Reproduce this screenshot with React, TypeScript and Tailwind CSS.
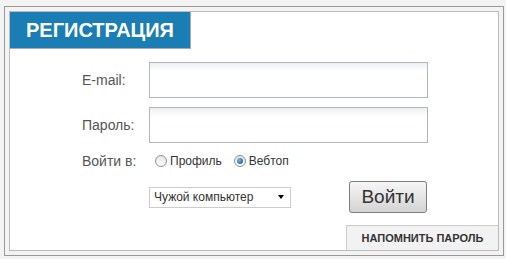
const font = { fontFamily: '"Liberation Sans", Arial, sans-serif' };

const Radio = ({ checked, label }: { checked?: boolean; label: string }) => (
    <label className="flex items-center gap-[3px] text-[12px] text-[#333]">
        <span className="flex h-[12px] w-[12px] items-center justify-center rounded-full border border-[#8f8f8f] bg-gradient-to-b from-[#e6e6e6] to-[#fdfdfd]">
            {checked && <span className="h-[6px] w-[6px] rounded-full bg-[radial-gradient(circle_at_35%_35%,#6fb7ec,#0c4f8a)]" />}
        </span>
        {label}
    </label>
);

const Field = ({ label }: { label: string }) => (
    <div className="flex items-center">
        <span className="w-[67px] text-[14px] text-[#555]">{label}</span>
        <div className="h-[36px] w-[279px] border border-[#b4b4c6] bg-gradient-to-b from-[#eceff1] via-white via-[25%] to-white" />
    </div>
);

export default function App() {
    return (
        <div className="h-[259px] w-[506px] bg-[#f3f3f3] pt-[6px] pl-[4px]" style={font}>
            <div className="h-[250px] w-[500px] border border-[#999] p-[4px]">
                <div className="flex h-full w-full flex-col border border-[#bbb] bg-white">
                    <div className="flex h-[37px] w-[181px] items-center border-r border-b border-[#aaa] bg-[#1a7db4] pl-[16px] text-[20px] font-bold text-white">
                        РЕГИСТРАЦИЯ
                    </div>

                    <div className="ml-[72px] mt-[13px] flex flex-col gap-[9px]">
                        <Field label="E-mail:" />
                        <Field label="Пароль:" />
                    </div>

                    <div className="ml-[72px] mt-[8px] flex h-[20px] items-center">
                        <span className="w-[73px] text-[14px] text-[#555]">Войти в:</span>
                        <div className="flex items-center gap-[12px]">
                            <Radio label="Профиль" />
                            <Radio checked label="Вебтоп" />
                        </div>
                    </div>

                    <div className="ml-[139px] mt-[10px] flex items-center">
                        <div className="flex h-[21px] w-[142px] items-center justify-between border border-[#ccc] pl-[4px] pr-[6px] text-[12px] text-[#333]">
                            Чужой компьютер
                            <span className="h-0 w-0 border-x-[3.5px] border-t-[4px] border-x-transparent border-t-black" />
                        </div>
                        <button className="ml-[58px] h-[32px] w-[78px] rounded-[3px] border border-[#7d7d7d] bg-gradient-to-b from-[#f7f7f7] to-[#d3d3d3] text-[19px] text-[#333]">
                            Войти
                        </button>
                    </div>

                    <div className="mt-auto flex h-[25px] w-[152px] items-center justify-center self-end border-t border-l border-[#ccc] bg-[#f2f2f2] text-[11px] font-bold text-[#333]">
                        НАПОМНИТЬ ПАРОЛЬ
                    </div>
                </div>
            </div>
        </div>
    );
}
